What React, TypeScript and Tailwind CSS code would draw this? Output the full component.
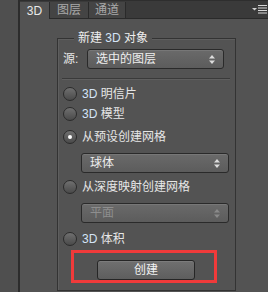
import React from 'react';

function Arrows({ disabled }: { disabled?: boolean }) {
  const c = disabled ? '#8a8a8a' : '#dcdcdc';
  return (
    <svg width="6" height="9" viewBox="0 0 6 9" className="shrink-0">
      <path d="M3 0 L6 3.5 L0 3.5 Z" fill={c} />
      <path d="M0 5.5 L6 5.5 L3 9 Z" fill={c} />
    </svg>
  );
}

function Select({ label, width, disabled }: { label: string; width: string; disabled?: boolean }) {
  return (
    <div
      className={`flex h-[20px] ${width} items-center justify-between rounded-[3px] border border-[#2a2a2a] bg-gradient-to-b from-[#6a6a6a] to-[#5c5c5c] pl-[8px] pr-[8px] shadow-[inset_0_1px_0_#777] ${
        disabled ? 'text-[#8e8e8e]' : 'text-[#eeeeee]'
      }`}
    >
      <span>{label}</span>
      <Arrows disabled={disabled} />
    </div>
  );
}

function Radio({ label, checked, tag }: { label: string; checked?: boolean; tag?: boolean }) {
  return (
    <div className="ml-[5px] flex h-[14px] items-center gap-[5px]">
      <div className="flex h-[14px] w-[14px] items-center justify-center rounded-full border border-[#2b2b2b] bg-gradient-to-b from-[#707070] to-[#4a4a4a]">
        {checked && <div className="h-[4px] w-[4px] rounded-full bg-white" />}
      </div>
      <span>
        {tag && <span className="text-[#d4e4f6]">3D </span>}
        {label}
      </span>
    </div>
  );
}

export default function App() {
  return (
    <div className="flex h-[292px] w-[268px] overflow-hidden bg-[#535353] font-['Liberation_Sans','Noto_Sans_CJK_SC',sans-serif] text-[12px] leading-[14px] text-[#e6e6e6]">
      <div className="w-[20px] shrink-0 border-r-2 border-[#2c2c2c] bg-[#4f4f4f]" />
      <div className="flex flex-1 flex-col">
        {/* tabs */}
        <div className="flex h-[19px] items-end border-t border-[#2e2e2e] bg-[#3a3a3a]">
          <div className="flex h-[17px] w-[29px] items-center justify-center bg-[#535353] text-[#e8e8e8]">3D</div>
          <div className="flex h-[17px] w-[39px] items-center justify-center border-l border-b border-[#2a2a2a] bg-[#444444] text-[#a9a9a9]">
            图层
          </div>
          <div className="flex h-[17px] w-[38px] items-center justify-center border-x border-b border-[#2a2a2a] bg-[#444444] text-[#a9a9a9]">
            通道
          </div>
          <div className="h-[17px] flex-1 border-b border-[#2a2a2a]" />
          <div className="flex h-[18px] items-center border-b border-[#2a2a2a] pr-[1px]">
            <svg width="15" height="10" viewBox="0 0 15 10">
              <path d="M0 3 L5 3 L2.5 5.5 Z" fill="#d0d0d0" />
              <rect x="6" y="0" width="9" height="1" fill="#d8d8d8" />
              <rect x="6" y="2.5" width="9" height="1" fill="#d8d8d8" />
              <rect x="6" y="5" width="9" height="1" fill="#d8d8d8" />
              <rect x="6" y="7.5" width="9" height="1" fill="#d8d8d8" />
            </svg>
          </div>
        </div>

        <div className="pl-[37px] pt-[19px]">
          <div className="relative h-[253px] w-[179px] border border-[#333333] shadow-[inset_1px_1px_0_#5e5e5e]">
            <span className="absolute -top-[8px] left-[16px] bg-[#535353] px-[4px] text-[#eeeeee]">
              新建 <span className="text-[#d4e4f6]">3D</span> 对象
            </span>

            <div className="ml-[5px] mt-[10px] flex h-[20px] items-center gap-[8px]">
              <span className="w-[16px]">源:</span>
              <Select label="选中的图层" width="w-[137px]" />
            </div>

            <div className="ml-[4px] mt-[9px] h-[1px] w-[168px] bg-[#3a3a3a] shadow-[0_1px_0_#5f5f5f]" />

            <div className="mt-[8px]">
              <Radio label="明信片" tag />
            </div>
            <div className="mt-[6px]">
              <Radio label="模型" tag />
            </div>
            <div className="mt-[9px]">
              <Radio label="从预设创建网格" checked />
            </div>
            <div className="ml-[23px] mt-[9px]">
              <Select label="球体" width="w-[148px]" />
            </div>
            <div className="mt-[7px]">
              <Radio label="从深度映射创建网格" />
            </div>
            <div className="ml-[23px] mt-[9px]">
              <Select label="平面" width="w-[148px]" disabled />
            </div>
            <div className="mt-[9px]">
              <Radio label="体积" tag />
            </div>

            <div className="ml-[13px] mt-[4px] h-[33px] w-[146px] border-[3px] border-[#f03a3a] pl-[23px] pt-[7px]">
              <button className="flex h-[20px] w-[98px] items-center justify-center rounded-[3px] border border-[#262626] bg-gradient-to-b from-[#707070] to-[#5e5e5e] text-[#f2f2f2] shadow-[inset_0_1px_0_#7c7c7c]">
                创建
              </button>
            </div>
          </div>
        </div>
      </div>
    </div>
  );
}
